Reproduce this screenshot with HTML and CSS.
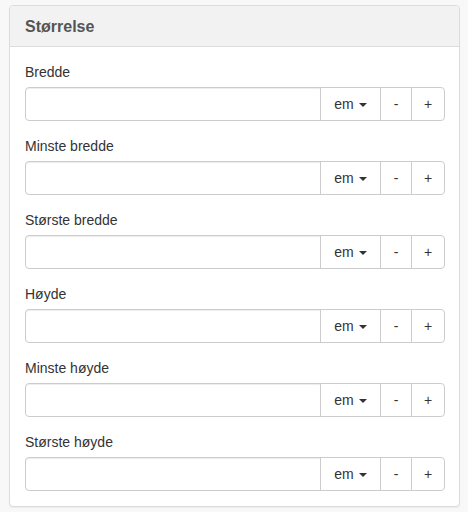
FILE: index.html
```html
<!DOCTYPE html>
<html lang="no">
<head>
<meta charset="utf-8">
<title>Størrelse</title>
<link rel="stylesheet" href="styles.css">
</head>
<body>
<div class="panel">
  <div class="panel-heading"><h3 class="panel-title">Størrelse</h3></div>
  <div class="panel-body">
    <div class="form-group">
      <label class="lbl">Bredde</label>
      <div class="input-group">
        <input class="form-control" type="text">
        <button class="btn btn-unit">em <span class="caret"></span></button>
        <button class="btn btn-minus">-</button>
        <button class="btn btn-plus">+</button>
      </div>
    </div>
    <div class="form-group">
      <label class="lbl">Minste bredde</label>
      <div class="input-group">
        <input class="form-control" type="text">
        <button class="btn btn-unit">em <span class="caret"></span></button>
        <button class="btn btn-minus">-</button>
        <button class="btn btn-plus">+</button>
      </div>
    </div>
    <div class="form-group">
      <label class="lbl">Største bredde</label>
      <div class="input-group">
        <input class="form-control" type="text">
        <button class="btn btn-unit">em <span class="caret"></span></button>
        <button class="btn btn-minus">-</button>
        <button class="btn btn-plus">+</button>
      </div>
    </div>
    <div class="form-group">
      <label class="lbl">Høyde</label>
      <div class="input-group">
        <input class="form-control" type="text">
        <button class="btn btn-unit">em <span class="caret"></span></button>
        <button class="btn btn-minus">-</button>
        <button class="btn btn-plus">+</button>
      </div>
    </div>
    <div class="form-group">
      <label class="lbl">Minste høyde</label>
      <div class="input-group">
        <input class="form-control" type="text">
        <button class="btn btn-unit">em <span class="caret"></span></button>
        <button class="btn btn-minus">-</button>
        <button class="btn btn-plus">+</button>
      </div>
    </div>
    <div class="form-group last">
      <label class="lbl">Største høyde</label>
      <div class="input-group">
        <input class="form-control" type="text">
        <button class="btn btn-unit">em <span class="caret"></span></button>
        <button class="btn btn-minus">-</button>
        <button class="btn btn-plus">+</button>
      </div>
    </div>
  </div>
</div>
</body>
</html>
```

FILE: styles.css
```css
* { box-sizing: border-box; }
html, body { height: 100%; }
body {
  margin: 0;
  padding: 5px 8px 0 9px;
  background: #f8f8f8;
  font-family: "Liberation Sans", Arial, Helvetica, sans-serif;
  font-size: 14px;
  line-height: 20px;
  color: #333;
}
.panel {
  background: #fff;
  border: 1px solid #dcdcdc;
  border-radius: 4px;
  box-shadow: 0 1px 1px rgba(0,0,0,0.05);
}
.panel-heading {
  background: #f2f2f2;
  border-bottom: 1px solid #dcdcdc;
  border-radius: 3px 3px 0 0;
  padding: 11px 15px 10px 15px;
  height: 41px;
}
.panel-title {
  margin: 0;
  font-size: 16px;
  line-height: 20px;
  font-weight: bold;
  color: #555;
}
.panel-body {
  padding: 15px;
}
.form-group { margin-bottom: 15px; }
.form-group.last { margin-bottom: 0; }
.lbl {
  display: block;
  margin-bottom: 5px;
  font-weight: normal;
  color: #333;
  height: 20px;
}
.input-group {
  display: flex;
  height: 34px;
  margin-right: -1px;
}
.form-control {
  flex: 1;
  min-width: 0;
  height: 34px;
  margin: 0;
  border: 1px solid #ccc;
  border-radius: 4px 0 0 4px;
  padding: 6px 12px;
  font: inherit;
  background: #fff;
  box-shadow: inset 0 1px 1px rgba(0,0,0,0.075);
}
.btn {
  height: 34px;
  margin: 0 0 0 -1px;
  border: 1px solid #ccc;
  background: #fff;
  color: #333333;
  -webkit-text-fill-color: #333333;
  font-family: inherit;
  font-size: 14px;
  line-height: 20px;
  padding: 6px 12px;
  border-radius: 0;
  display: flex;
  align-items: center;
  justify-content: center;
}
.btn-unit { width: 61px; }
.btn-minus { width: 32px; }
.btn-plus { width: 34px; border-radius: 0 4px 4px 0; }
.caret {
  display: inline-block;
  width: 0;
  height: 0;
  margin-left: 5px;
  margin-top: 1px;
  border-top: 4px solid #333;
  border-left: 4px solid transparent;
  border-right: 4px solid transparent;
}
```
